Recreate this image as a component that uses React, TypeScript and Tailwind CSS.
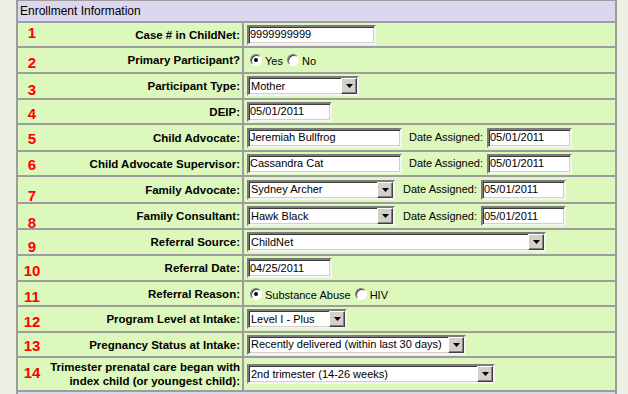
import type { ReactNode } from "react";

const sunken =
  "border-2 border-t-[#7b7b7b] border-l-[#7b7b7b] border-b-[#f4f4f4] border-r-[#f4f4f4] shadow-[inset_1px_1px_0_#3c3c3c,inset_-1px_-1px_0_#d4d0c8]";

function TextBox({ value, w }: { value: string; w: string }) {
  return (
    <div className={`${w} h-[20px] bg-white ${sunken} flex items-center pl-[1px] text-[11px] text-black whitespace-nowrap overflow-hidden`}>
      {value}
    </div>
  );
}

function Select({ value, w }: { value: string; w: string }) {
  return (
    <div className={`${w} h-[20px] bg-white ${sunken} flex items-center`}>
      <span className="flex-1 pl-[2px] text-[11px] text-black whitespace-nowrap overflow-hidden">{value}</span>
      <div className="w-[16px] h-[16px] bg-[#d4d0c8] border border-t-white border-l-white border-b-[#404040] border-r-[#404040] shadow-[inset_-1px_-1px_0_#808080] flex items-center justify-center">
        <svg width="7" height="4" viewBox="0 0 7 4">
          <path d="M0 0h7L3.5 4z" fill="#000" />
        </svg>
      </div>
    </div>
  );
}

function Radio({ checked, label }: { checked?: boolean; label: string }) {
  return (
    <div className="flex items-center">
      <div className="w-[12px] h-[12px] rounded-full bg-white border border-t-[#808080] border-l-[#808080] border-b-white border-r-white shadow-[inset_1px_1px_0_#404040] flex items-center justify-center">
        {checked && <div className="w-[4px] h-[4px] rounded-full bg-black" />}
      </div>
      <span className="ml-[3px] mt-[3px] text-[11px] text-black">{label}</span>
    </div>
  );
}

function Assigned({ gap, date }: { gap: string; date: string }) {
  return (
    <>
      <span className={`${gap} mr-[4px] text-[11px] text-black`}>Date Assigned:</span>
      <TextBox value={date} w="w-[85px]" />
    </>
  );
}

type Row = { num: string; label: ReactNode; h: string; shift: string; field: ReactNode };

const rows: Row[] = [
  { num: "1", label: "Case # in ChildNet:", h: "h-[23px]", shift: "-translate-y-[2px]", field: <TextBox value="9999999999" w="w-[129px]" /> },
  {
    num: "2",
    label: "Primary Participant?",
    h: "h-[24px]",
    shift: "translate-y-[2px]",
    field: (
      <div className="flex items-center gap-[4px] ml-[3px]">
        <Radio checked label="Yes" />
        <Radio label="No" />
      </div>
    ),
  },
  { num: "3", label: "Participant Type:", h: "h-[24px]", shift: "translate-y-[3px]", field: <Select value="Mother" w="w-[112px]" /> },
  { num: "4", label: "DEIP:", h: "h-[23px]", shift: "translate-y-[2px]", field: <TextBox value="05/01/2011" w="w-[85px]" /> },
  {
    num: "5",
    label: "Child Advocate:",
    h: "h-[25px]",
    shift: "translate-y-[1px]",
    field: (
      <>
        <TextBox value="Jeremiah Bullfrog" w="w-[155px]" />
        <Assigned gap="ml-[7px]" date="05/01/2011" />
      </>
    ),
  },
  {
    num: "6",
    label: "Child Advocate Supervisor:",
    h: "h-[23px]",
    shift: "translate-y-[1px]",
    field: (
      <>
        <TextBox value="Cassandra Cat" w="w-[155px]" />
        <Assigned gap="ml-[7px]" date="05/01/2011" />
      </>
    ),
  },
  {
    num: "7",
    label: "Family Advocate:",
    h: "h-[25px]",
    shift: "translate-y-[6px]",
    field: (
      <>
        <Select value="Sydney Archer" w="w-[148px]" />
        <Assigned gap="ml-[8px]" date="05/01/2011" />
      </>
    ),
  },
  {
    num: "8",
    label: "Family Consultant:",
    h: "h-[24px]",
    shift: "translate-y-[6px]",
    field: (
      <>
        <Select value="Hawk Black" w="w-[148px]" />
        <Assigned gap="ml-[8px]" date="05/01/2011" />
      </>
    ),
  },
  { num: "9", label: "Referral Source:", h: "h-[24px]", shift: "translate-y-[4px]", field: <Select value="ChildNet" w="w-[299px]" /> },
  { num: "10", label: "Referral Date:", h: "h-[24px]", shift: "translate-y-[2px]", field: <TextBox value="04/25/2011" w="w-[85px]" /> },
  {
    num: "11",
    label: "Referral Reason:",
    h: "h-[23px]",
    shift: "translate-y-[3px]",
    field: (
      <div className="flex items-center gap-[4px] ml-[3px]">
        <Radio checked label="Substance Abuse" />
        <Radio label="HIV" />
      </div>
    ),
  },
  { num: "12", label: "Program Level at Intake:", h: "h-[24px]", shift: "translate-y-[2px]", field: <Select value="Level I - Plus" w="w-[100px]" /> },
  {
    num: "13",
    label: "Pregnancy Status at Intake:",
    h: "h-[23px]",
    shift: "translate-y-[1px]",
    field: <Select value="Recently delivered (within last 30 days)" w="w-[219px]" />,
  },
  {
    num: "14",
    label: (
      <>
        Trimester prenatal care began with
        <br />
        index child (or youngest child):
      </>
    ),
    h: "h-[32px]",
    shift: "-translate-y-[2px]",
    field: <Select value="2nd trimester (14-26 weeks)" w="w-[248px]" />,
  },
];

export default function App() {
  return (
    <div className="w-[628px] h-[394px] overflow-hidden bg-[#edf0e3] font-['Liberation_Sans',Arial,sans-serif]">
      <div className="ml-[16px] w-[601px] bg-[#9d9d9d] pt-[1px] px-[2px] flex flex-col gap-[2px]">
        {/* Section header */}
        <div className="h-[20px] bg-[#dcd6ee] flex items-center pl-[2px] text-[12px] text-black">Enrollment Information</div>

        {rows.map((r) => (
          <div key={r.num} className={`${r.h} grid grid-cols-[224px_371px] gap-[2px]`}>
            <div className="bg-[#ddf8bc] flex items-center">
              <span className={`w-[28px] text-center text-[15px] font-bold text-[#ff0000] leading-none ${r.shift}`}>{r.num}</span>
              <span className="flex-1 text-right pr-[2px] text-[11.5px] leading-[14px] font-bold text-black">{r.label}</span>
            </div>
            <div className="bg-[#ddf8bc] flex items-center pl-[3px]">{r.field}</div>
          </div>
        ))}

        {/* Next section, cut off */}
        <div className="h-[20px] bg-[#dcd6ee]" />
      </div>
    </div>
  );
}
